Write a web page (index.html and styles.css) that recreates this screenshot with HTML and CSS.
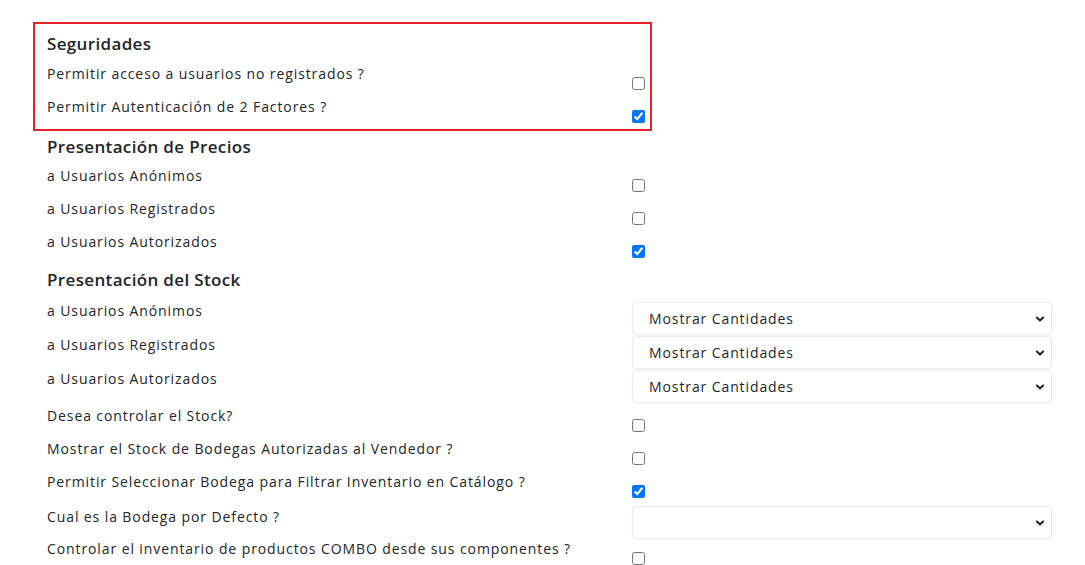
FILE: index.html
```html
<!DOCTYPE html>
<html lang="es">
<head>
<meta charset="utf-8">
<title>Configuración</title>
<link rel="stylesheet" href="styles.css">
</head>
<body>
<main class="page">
  <section class="section section--highlight">
    <h3 class="section__title">Seguridades</h3>
    <div class="row">
      <label class="row__label" for="c1">Permitir acceso a usuarios no registrados ?</label>
      <div class="row__control"><input class="check" type="checkbox" id="c1"></div>
    </div>
    <div class="row">
      <label class="row__label" for="c2">Permitir Autenticación de 2 Factores ?</label>
      <div class="row__control"><input class="check" type="checkbox" id="c2" checked></div>
    </div>
  </section>

  <section class="section">
    <h3 class="section__title">Presentación de Precios</h3>
    <div class="row">
      <label class="row__label" for="p1">a Usuarios Anónimos</label>
      <div class="row__control"><input class="check" type="checkbox" id="p1"></div>
    </div>
    <div class="row">
      <label class="row__label" for="p2">a Usuarios Registrados</label>
      <div class="row__control"><input class="check" type="checkbox" id="p2"></div>
    </div>
    <div class="row">
      <label class="row__label" for="p3">a Usuarios Autorizados</label>
      <div class="row__control"><input class="check" type="checkbox" id="p3" checked></div>
    </div>
  </section>

  <section class="section">
    <h3 class="section__title">Presentación del Stock</h3>
    <div class="row row--select">
      <label class="row__label" for="s1">a Usuarios Anónimos</label>
      <div class="row__control"><select class="select" id="s1"><option>Mostrar Cantidades</option></select></div>
    </div>
    <div class="row row--select">
      <label class="row__label" for="s2">a Usuarios Registrados</label>
      <div class="row__control"><select class="select" id="s2"><option>Mostrar Cantidades</option></select></div>
    </div>
    <div class="row row--select">
      <label class="row__label" for="s3">a Usuarios Autorizados</label>
      <div class="row__control"><select class="select" id="s3"><option>Mostrar Cantidades</option></select></div>
    </div>
    <div class="row row--spaced">
      <label class="row__label" for="k1">Desea controlar el Stock?</label>
      <div class="row__control"><input class="check" type="checkbox" id="k1"></div>
    </div>
    <div class="row">
      <label class="row__label" for="k2">Mostrar el Stock de Bodegas Autorizadas al Vendedor ?</label>
      <div class="row__control"><input class="check" type="checkbox" id="k2"></div>
    </div>
    <div class="row">
      <label class="row__label" for="k3">Permitir Seleccionar Bodega para Filtrar Inventario en Catálogo ?</label>
      <div class="row__control"><input class="check" type="checkbox" id="k3" checked></div>
    </div>
    <div class="row row--select row--select-tight">
      <label class="row__label" for="k4">Cual es la Bodega por Defecto ?</label>
      <div class="row__control"><select class="select" id="k4"><option></option></select></div>
    </div>
    <div class="row">
      <label class="row__label" for="k5">Controlar el inventario de productos COMBO desde sus componentes ?</label>
      <div class="row__control"><input class="check" type="checkbox" id="k5"></div>
    </div>
  </section>
</main>
</body>
</html>
```

FILE: styles.css
```css
* {
  box-sizing: border-box;
}

html, body {
  margin: 0;
  padding: 0;
  background: #ffffff;
}

body {
  font-family: "Open Sans", "Noto Sans", sans-serif;
  color: #212529;
  font-size: 14px;
  letter-spacing: 0.9px;
  overflow: hidden;
}

.page {
  padding: 22px 0 0 33px;
}

.section {
  padding: 4px 0 0 14px;
}

.section--highlight {
  width: 619px;
  border: 2px solid #e4202b;
  padding: 8px 0 0 12px;
}

.section__title {
  margin: 0 0 6px;
  font-size: 17px;
  line-height: 24px;
  font-weight: 600;
  letter-spacing: 0.35px;
  color: #212529;
}

.section--highlight .section__title {
  margin-bottom: 7px;
}

.row {
  display: grid;
  grid-template-columns: 585px minmax(0, 420px);
  height: 33px;
  align-items: start;
}

.row--select {
  height: 34px;
}

.row--spaced {
  margin-top: 5px;
}

.row__label {
  line-height: 22px;
  white-space: nowrap;
}

.row--select .row__label {
  padding-top: 2px;
}

.row__control {
  padding-top: 14px;
  line-height: 0;
}

.row--select .row__control {
  padding-top: 4px;
}

.row--select-tight .row__control {
  padding-top: 2px;
}

.check {
  margin: 0;
  width: 13px;
  height: 13px;
}

.select {
  display: block;
  width: 420px;
  height: 33px;
  margin: 0;
  padding: 0 30px 0 16px;
  font-family: inherit;
  font-size: 14px;
  letter-spacing: 0.9px;
  color: #212529;
  background-color: #ffffff;
  border: 1px solid #ebebeb;
  border-radius: 4px;
  box-shadow: 0 1px 2px rgba(0, 0, 0, 0.04);
  -webkit-appearance: none;
  appearance: none;
  background-image: url("data:image/svg+xml,%3csvg xmlns='http://www.w3.org/2000/svg' viewBox='0 0 16 16'%3e%3cpath fill='none' stroke='%23222' stroke-linecap='round' stroke-linejoin='round' stroke-width='3.2' d='M3 5.5l5 5 5-5'/%3e%3c/svg%3e");
  background-repeat: no-repeat;
  background-position: right 6px center;
  background-size: 10px 10px;
}
```
